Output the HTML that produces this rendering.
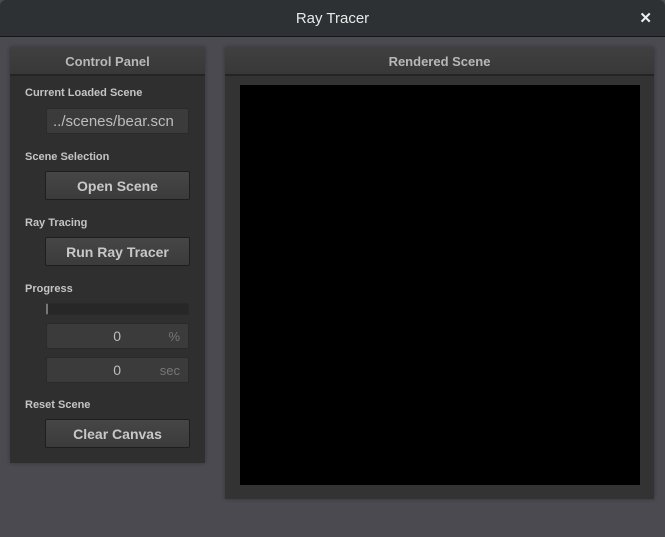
<!DOCTYPE html>
<html><head><style>
*{margin:0;padding:0;box-sizing:border-box}
body{width:665px;height:537px;background:#4b4a50;font-family:"Liberation Sans",sans-serif;position:relative;overflow:hidden}
.tb{position:absolute;left:0;top:0;width:665px;height:37px;background:#2d3133;border-bottom:1px solid #151617;border-radius:6px 6px 0 0;color:#e8e8e8;font-size:15px;text-align:center;line-height:38px}
.x{position:absolute;right:13px;top:0;font-size:15px;font-weight:bold;color:#eee}
.p{position:absolute;background:#2f2f2f;box-shadow:0 0 4px rgba(0,0,0,.3)}
.h{height:29px;background:linear-gradient(#404040,#383838);border-bottom:2px solid #242424;color:#b8b8b8;font-size:13px;font-weight:bold;text-align:center;line-height:29px}
.l{position:absolute;left:25px;color:#c4c4c4;font-size:11px;font-weight:bold}
.f{position:absolute;left:46px;width:143px;background:#3b3b3b;border:1px solid #2a2a2a;border-radius:2px;color:#bdbdbd;font-size:15px}
.b{position:absolute;left:45px;width:145px;height:29px;background:linear-gradient(#464646,#3b3b3b);border:1px solid #1e1e1e;border-radius:2px;color:#c8c8c8;font-size:14px;font-weight:bold;text-align:center;line-height:28px}
.u{position:absolute;right:8px;color:#777;font-size:13px}
</style></head><body>
<div class="tb">Ray Tracer<span class="x">✕</span></div>
<div class="p" style="left:10px;top:47px;width:195px;height:416px"><div class="h">Control Panel</div></div>
<div class="p" style="left:225px;top:47px;width:429px;height:452px;background:#333"><div class="h">Rendered Scene</div>
<div style="position:absolute;left:15px;top:38px;width:400px;height:400px;background:#000"></div></div>
<div class="l" style="top:87px">Current Loaded Scene</div>
<div class="f" style="top:108px;height:26px;line-height:26px;padding-left:6px">../scenes/bear.scn</div>
<div class="l" style="top:151px">Scene Selection</div>
<div class="b" style="top:171px">Open Scene</div>
<div class="l" style="top:217px">Ray Tracing</div>
<div class="b" style="top:237px">Run Ray Tracer</div>
<div class="l" style="top:283px">Progress</div>
<div class="f" style="top:303px;height:12px;background:#272727;border-left:2px solid #777"></div>
<div class="f" style="top:323px;height:26px;line-height:25px;text-align:right;padding-right:67px;font-size:14px">0<span class="u">%</span></div>
<div class="f" style="top:357px;height:26px;line-height:25px;text-align:right;padding-right:67px;font-size:14px">0<span class="u">sec</span></div>
<div class="l" style="top:399px">Reset Scene</div>
<div class="b" style="top:419px">Clear Canvas</div>
</body></html>
